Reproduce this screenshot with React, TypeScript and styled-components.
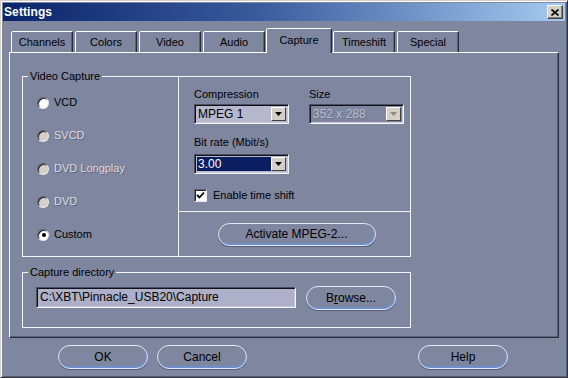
import React from "react";
import styled, { createGlobalStyle } from "styled-components";

const BG = "#7f869f";

const GlobalStyle = createGlobalStyle`
  html, body {
    margin: 0;
    padding: 0;
    background: ${BG};
  }
  body {
    font-family: "Liberation Sans", Arial, sans-serif;
    font-size: 11px;
    color: #000;
  }
`;

const Window = styled.div`
  width: 568px;
  height: 378px;
  box-sizing: border-box;
  background: ${BG};
  border: 1px solid;
  border-color: #d4d0c8 #303038 #303038 #d4d0c8;
  box-shadow: inset 1px 1px 0 #ffffff, inset -1px -1px 0 #5a6078;
  padding: 2px;
  display: flex;
  flex-direction: column;
`;

const TitleBar = styled.div`
  height: 18px;
  display: flex;
  align-items: center;
  justify-content: space-between;
  padding: 0 2px 0 1px;
  background: linear-gradient(90deg, #0a246a 0%, #3a5a9c 45%, #a6caf0 100%);
`;

const Title = styled.span`
  color: #fff;
  font-weight: bold;
  font-size: 12px;
  letter-spacing: 0.1px;
`;

const CloseButton = styled.div`
  width: 16px;
  height: 14px;
  box-sizing: border-box;
  background: #d4d0c8;
  border: 1px solid;
  border-color: #fff #404040 #404040 #fff;
  box-shadow: inset -1px -1px 0 #808080;
  display: flex;
  align-items: center;
  justify-content: center;
`;

const Content = styled.div`
  padding: 7px 0 0 6px;
  display: flex;
  flex-direction: column;
`;

const TabRow = styled.div`
  display: flex;
  align-items: flex-end;
  height: 25px;
  gap: 2px;
  padding-left: 2px;
  margin-bottom: -1px;
  position: relative;
  z-index: 1;
`;

const Tab = styled.div<{ $active?: boolean }>`
  box-sizing: border-box;
  width: ${(p) => (p.$active ? 66 : 62)}px;
  height: ${(p) => (p.$active ? 25 : 21)}px;
  margin: ${(p) => (p.$active ? "0 -1px 0 -1px" : "0 0 1px 0")};
  background: ${BG};
  border: 1px solid;
  border-bottom: none;
  border-color: #fff #262a38 transparent #fff;
  border-radius: 2px 2px 0 0;
  box-shadow: inset -1px 0 0 #5c627a;
  display: flex;
  align-items: center;
  justify-content: center;
  padding-bottom: ${(p) => (p.$active ? 2 : 0)}px;
`;

const Panel = styled.div`
  width: 550px;
  height: 286px;
  box-sizing: border-box;
  border: 1px solid;
  border-color: #fff #262a38 #262a38 #fff;
  box-shadow: inset -1px -1px 0 #5c627a;
  padding: 23px 0 0 12px;
  display: flex;
  flex-direction: column;
`;

const Group = styled.div<{ $h: number }>`
  position: relative;
  width: 389px;
  height: ${(p) => p.$h}px;
  box-sizing: border-box;
  border: 1px solid #f4f4f8;
  display: flex;
`;

const Legend = styled.span`
  position: absolute;
  top: -7px;
  left: 5px;
  padding: 0 2px;
  line-height: 13px;
  background: ${BG};
`;

const LeftCol = styled.div`
  width: 156px;
  border-right: 1px solid #f4f4f8;
  padding: 19px 0 0 14px;
  box-sizing: border-box;
  display: flex;
  flex-direction: column;
  gap: 20px;
`;

const RightCol = styled.div`
  flex: 1;
  display: flex;
  flex-direction: column;
`;

const RightTop = styled.div`
  height: 135px;
  box-sizing: border-box;
  border-bottom: 1px solid #f4f4f8;
  padding: 11px 0 0 15px;
  display: flex;
  flex-direction: column;
`;

const RightBottom = styled.div`
  flex: 1;
  display: flex;
  align-items: center;
  justify-content: center;
  padding-left: 4px;
`;

const Row = styled.div<{ $gap?: number }>`
  display: flex;
  align-items: center;
  gap: ${(p) => p.$gap ?? 5}px;
  height: 13px;
`;

const Radio = styled.span<{ $disabled?: boolean; $checked?: boolean }>`
  width: 12px;
  height: 12px;
  box-sizing: border-box;
  border-radius: 50%;
  background: ${(p) => (p.$disabled ? "#d4d0c8" : "#fff")};
  border: 1px solid;
  border-color: #5a5e70 #e8e8ee #e8e8ee #5a5e70;
  box-shadow: inset 1px 1px 0 #202028;
  display: flex;
  align-items: center;
  justify-content: center;
  &::after {
    content: "";
    display: ${(p) => (p.$checked ? "block" : "none")};
    width: 4px;
    height: 4px;
    border-radius: 50%;
    background: #000;
    margin: 1px 0 0 1px;
  }
`;

const Label = styled.span<{ $disabled?: boolean }>`
  line-height: 13px;
  white-space: nowrap;
  color: ${(p) => (p.$disabled ? "#dadae2" : "#000")};
  text-shadow: ${(p) => (p.$disabled ? "1px 1px 0 #60667e" : "none")};
`;

const FieldGrid = styled.div<{ $top?: number; $rowGap?: number }>`
  display: grid;
  grid-template-columns: 95px 94px;
  column-gap: 20px;
  row-gap: ${(p) => p.$rowGap ?? 3}px;
  margin-top: ${(p) => p.$top ?? 0}px;
`;

const Select = styled.div<{ $disabled?: boolean }>`
  width: 95px;
  height: 20px;
  box-sizing: border-box;
  border: 1px solid;
  border-color: #4a4e60 #f4f4f8 #f4f4f8 #4a4e60;
  box-shadow: inset 1px 1px 0 #101018, inset -1px -1px 0 #c8c8d4;
  background: ${(p) => (p.$disabled ? BG : "#b6b8ce")};
  padding: 2px;
  display: flex;
`;

const SelectText = styled.span<{ $disabled?: boolean; $highlight?: boolean }>`
  flex: 1;
  font-size: 12px;
  line-height: 14px;
  padding-left: 1px;
  background: ${(p) => (p.$highlight ? "#0c1e62" : "transparent")};
  color: ${(p) => (p.$highlight ? "#fff" : p.$disabled ? "#b8bccc" : "#000")};
  text-shadow: ${(p) => (p.$disabled ? "1px 1px 0 #6a7088" : "none")};
`;

const ArrowButton = styled.span`
  width: 15px;
  height: 14px;
  box-sizing: border-box;
  background: #d4d0c8;
  border: 1px solid;
  border-color: #fff #404040 #404040 #fff;
  display: flex;
  align-items: center;
  justify-content: center;
`;

const Checkbox = styled.span`
  width: 13px;
  height: 13px;
  box-sizing: border-box;
  background: #fff;
  border: 1px solid;
  border-color: #5a5e70 #e8e8ee #e8e8ee #5a5e70;
  box-shadow: inset 1px 1px 0 #202028;
  display: flex;
  align-items: center;
  justify-content: center;
`;

const CheckRow = styled(Row)`
  margin-top: 15px;
`;

const PillButton = styled.button<{ $w: number; $h?: number; $shift?: number }>`
  width: ${(p) => p.$w}px;
  height: ${(p) => p.$h ?? 23}px;
  margin-top: ${(p) => p.$shift ?? 0}px;
  border-radius: 12px;
  background: ${BG};
  border: 1px solid #e6e9f4;
  box-shadow: inset -1px -2px 1px #6f8fcc, 0 1px 0 #5a6080;
  font-family: "Liberation Sans", Arial, sans-serif;
  font-size: 12px;
  color: #000;
  padding: 0 0 1px 0;
  cursor: pointer;
`;

const DirGroup = styled(Group)`
  margin-top: 15px;
`;

const DirRow = styled.div`
  display: flex;
  align-items: flex-start;
  gap: 10px;
  padding: 14px 0 0 13px;
`;

const TextInput = styled.div`
  width: 260px;
  height: 21px;
  box-sizing: border-box;
  border: 1px solid;
  border-color: #4a4e60 #f4f4f8 #f4f4f8 #4a4e60;
  box-shadow: inset 1px 1px 0 #101018, inset -1px -1px 0 #c8c8d4;
  background: #adb0c8;
  font-size: 12px;
  line-height: 19px;
  padding-left: 3px;
  white-space: nowrap;
`;

const Footer = styled.div`
  display: flex;
  padding: 7px 57px 0 49px;
  gap: 9px;
`;

const Spacer = styled.div`
  flex: 1;
`;

const DownArrow = ({ color = "#000" }: { color?: string }) => (
  <svg width="7" height="4" viewBox="0 0 7 4">
    <path d="M0 0h7L3.5 4z" fill={color} />
  </svg>
);

const radios = [
  { label: "VCD", disabled: false, checked: false },
  { label: "SVCD", disabled: true, checked: false },
  { label: "DVD Longplay", disabled: true, checked: false },
  { label: "DVD", disabled: true, checked: false },
  { label: "Custom", disabled: false, checked: true },
];

const tabs = ["Channels", "Colors", "Video", "Audio", "Capture", "Timeshift", "Special"];

export default function App() {
  return (
    <>
      <GlobalStyle />
      <Window>
        <TitleBar>
          <Title>Settings</Title>
          <CloseButton>
            <svg width="8" height="7" viewBox="0 0 8 7">
              <path d="M0.5 0.5L7.5 6.5M7.5 0.5L0.5 6.5" stroke="#000" strokeWidth="1.6" />
            </svg>
          </CloseButton>
        </TitleBar>
        <Content>
          <TabRow>
            {tabs.map((t) => (
              <Tab key={t} $active={t === "Capture"}>
                {t}
              </Tab>
            ))}
          </TabRow>
          <Panel>
            <Group $h={181}>
              <Legend>Video Capture</Legend>
              <LeftCol>
                {radios.map((r) => (
                  <Row key={r.label}>
                    <Radio $disabled={r.disabled} $checked={r.checked} />
                    <Label $disabled={r.disabled}>{r.label}</Label>
                  </Row>
                ))}
              </LeftCol>
              <RightCol>
                <RightTop>
                  <FieldGrid>
                    <Label>Compression</Label>
                    <Label>Size</Label>
                    <Select>
                      <SelectText>MPEG 1</SelectText>
                      <ArrowButton>
                        <DownArrow />
                      </ArrowButton>
                    </Select>
                    <Select $disabled>
                      <SelectText $disabled>352 x 288</SelectText>
                      <ArrowButton>
                        <DownArrow color="#8a8a8a" />
                      </ArrowButton>
                    </Select>
                  </FieldGrid>
                  <FieldGrid $top={12} $rowGap={5}>
                    <Label>Bit rate (Mbit/s)</Label>
                    <span />
                    <Select>
                      <SelectText $highlight>3.00</SelectText>
                      <ArrowButton>
                        <DownArrow />
                      </ArrowButton>
                    </Select>
                  </FieldGrid>
                  <CheckRow $gap={6}>
                    <Checkbox>
                      <svg width="9" height="9" viewBox="0 0 9 9">
                        <path d="M1 4l2.5 2.5L8 1.5" stroke="#000" strokeWidth="1.8" fill="none" />
                      </svg>
                    </Checkbox>
                    <Label>Enable time shift</Label>
                  </CheckRow>
                </RightTop>
                <RightBottom>
                  <PillButton $w={158}>Activate MPEG-2...</PillButton>
                </RightBottom>
              </RightCol>
            </Group>
            <DirGroup $h={56}>
              <Legend>Capture directory</Legend>
              <DirRow>
                <TextInput>C:\XBT\Pinnacle_USB20\Capture</TextInput>
                <PillButton $w={90} $h={24} $shift={-1}>
                  B<u>r</u>owse...
                </PillButton>
              </DirRow>
            </DirGroup>
          </Panel>
          <Footer>
            <PillButton $w={90} $h={24}>OK</PillButton>
            <PillButton $w={90} $h={24}>Cancel</PillButton>
            <Spacer />
            <PillButton $w={90} $h={24}>Help</PillButton>
          </Footer>
        </Content>
      </Window>
    </>
  );
}
